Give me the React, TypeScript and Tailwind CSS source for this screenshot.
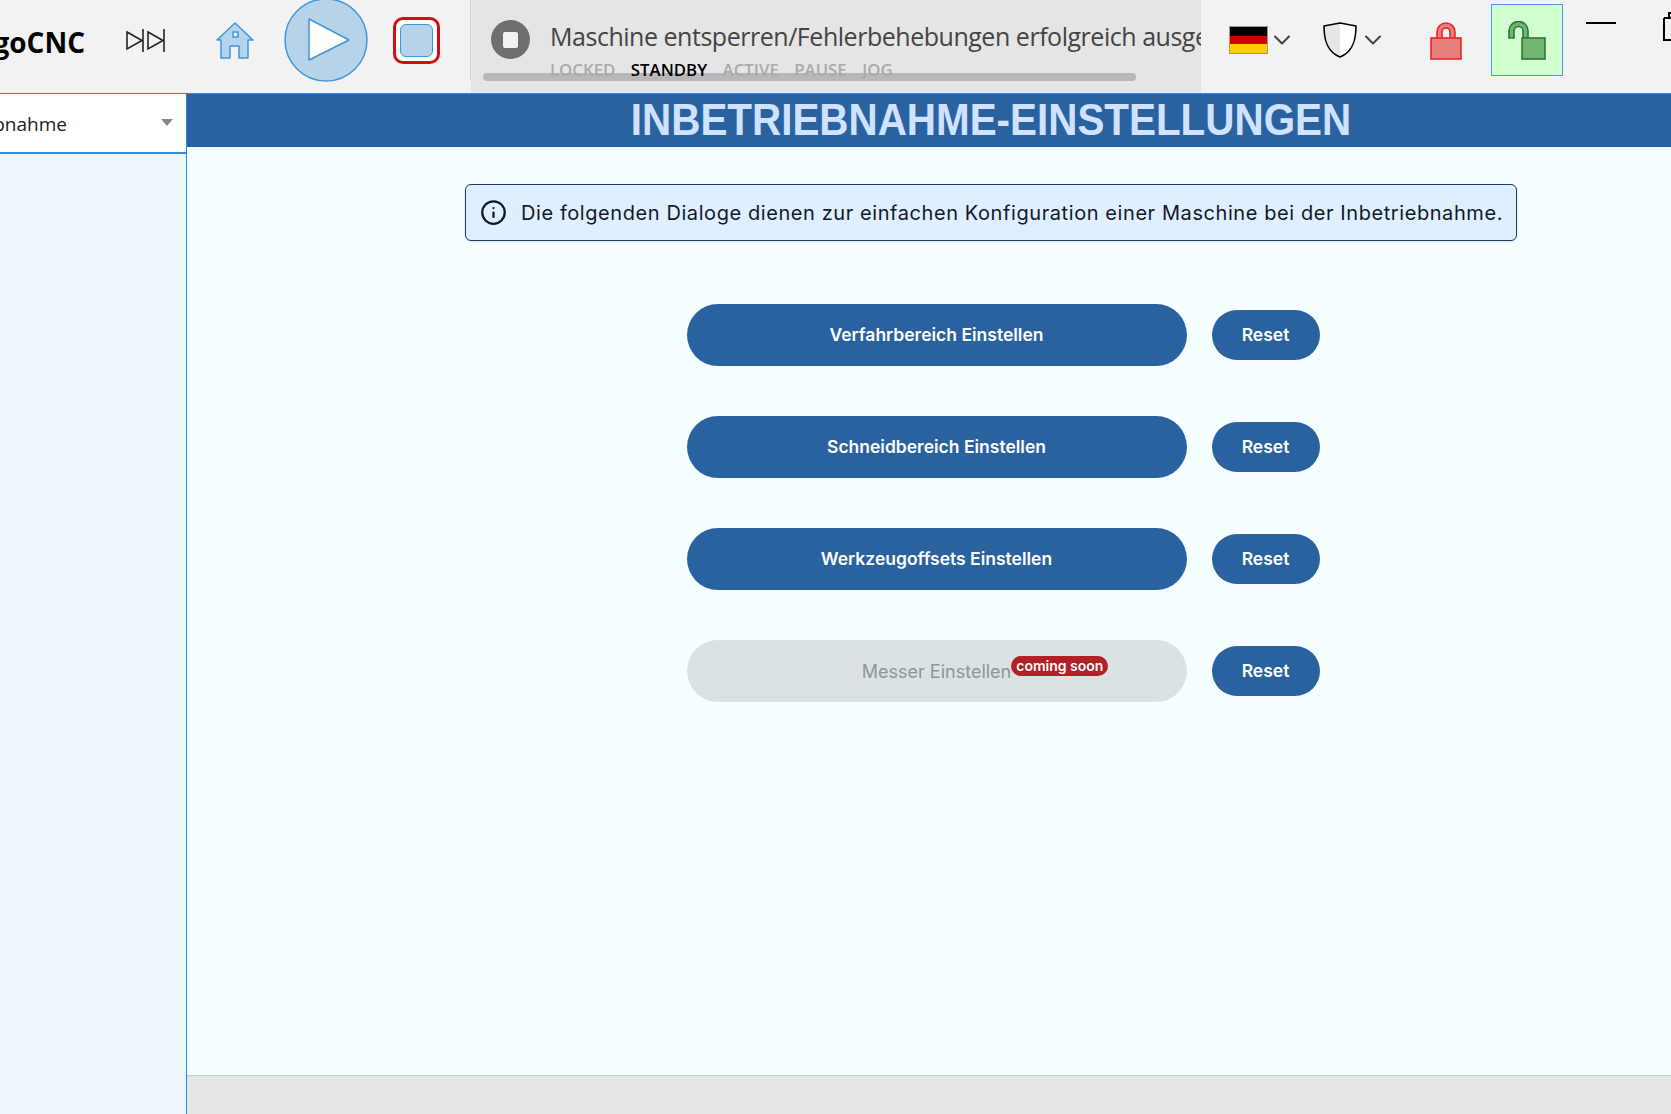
import { ChevronDown, Info } from "lucide-react";

const actions = ["Verfahrbereich Einstellen", "Schneidbereich Einstellen", "Werkzeugoffsets Einstellen"];
const states = ["LOCKED", "STANDBY", "ACTIVE", "PAUSE", "JOG"];

function ResetButton() {
  return (
    <button className="ml-[25px] h-[50px] w-[108px] rounded-full bg-[#2a62a0] text-[17.5px] font-semibold text-white">
      Reset
    </button>
  );
}

function SkipIcon() {
  return (
    <svg width="39" height="23" viewBox="0 0 39 23" fill="none" stroke="#222" strokeWidth="1.6" className="ml-[41px] shrink-0">
      <path d="M1 3 L16 11.5 L1 20 Z" />
      <path d="M17 0 V23" />
      <path d="M22 3 L37 11.5 L22 20 Z" />
      <path d="M38 0 V23" />
    </svg>
  );
}

function HomeIcon() {
  return (
    <svg width="38" height="37" viewBox="0 0 38 37" className="ml-[51px] shrink-0" fill="#b7d3ea" stroke="#3f97dc" strokeWidth="1.5">
      <path d="M1 18 L19 1 L37 18 H32 V36 H23 V24 H14 V36 H5 V18 Z" strokeLinejoin="round" />
      <rect x="17" y="10" width="5" height="5" fill="#f2f2f2" />
    </svg>
  );
}

function PlayButton() {
  return (
    <svg width="84" height="84" viewBox="0 0 84 84" className="ml-[30px] shrink-0">
      <circle cx="42" cy="42" r="41" fill="#b7d3ea" stroke="#3f97dc" strokeWidth="1.5" />
      <path d="M25 21 L65 42 L25 62 Z" fill="#fff" stroke="#3f97dc" strokeWidth="1.5" strokeLinejoin="round" />
    </svg>
  );
}

function StopButton() {
  return (
    <div className="ml-[25px] flex h-[47px] w-[47px] shrink-0 items-center justify-center rounded-[10px] border-[3.5px] border-[#d40d12] bg-white">
      <div className="h-[33px] w-[33px] rounded-[6px] border-[1.5px] border-[#3f97dc] bg-[#b7d3ea]" />
    </div>
  );
}

function Flag() {
  return (
    <div className="flex h-[28px] w-[39px] shrink-0 flex-col border border-[#a59a6a]">
      <div className="flex-1 bg-black" />
      <div className="flex-1 bg-[#d00000]" />
      <div className="flex-1 bg-[#ffce00]" />
    </div>
  );
}

function ShieldIcon() {
  return (
    <svg width="34" height="36" viewBox="0 0 34 36" className="shrink-0">
      <path d="M17 1 L33 4 C33 18 30 30 17 35 Z" fill="#fff" />
      <path d="M17 1 L1 4 C1 18 4 30 17 35 Z" fill="#e6e6e6" />
      <path d="M17 1 L33 4 C33 18 30 30 17 35 C4 30 1 18 1 4 Z" fill="none" stroke="#000" strokeWidth="1.6" strokeLinejoin="round" />
    </svg>
  );
}

function RedLock() {
  return (
    <svg width="32" height="39" viewBox="0 0 32 39" className="shrink-0" stroke="#ec2528" strokeWidth="1.6">
      <path d="M7 18 V11 A9 9 0 0 1 25 11 V18 H20 V11 A4 4 0 0 0 12 11 V18 Z" fill="#e77e7e" />
      <rect x="1" y="17" width="30" height="21" fill="#e77e7e" />
    </svg>
  );
}

function GreenLock() {
  return (
    <svg width="38" height="39" viewBox="0 0 38 39" stroke="#2c7a30" strokeWidth="1.6">
      <path d="M1 17 V10 A9.5 9.5 0 0 1 20 10 V17 H15 V10 A4 4 0 0 0 6 10 V17 Z" fill="#72b472" />
      <rect x="14" y="17" width="23" height="21" fill="#72b472" />
    </svg>
  );
}

function Header() {
  return (
    <header className="flex h-[93px] shrink-0 bg-[#f2f2f2] font-['Open_Sans',sans-serif]">
      <div className="flex h-[80px] w-[471px] shrink-0 items-center border-r border-[#d4d4d4]">
        <div className="mt-[3px] flex w-[85px] shrink-0 justify-end overflow-hidden text-[28px] font-bold whitespace-nowrap text-black">
          goCNC
        </div>
        <SkipIcon />
        <HomeIcon />
        <PlayButton />
        <StopButton />
      </div>
      <div className="relative flex w-[730px] shrink-0 bg-[#e5e5e5]">
        <div className="mt-[20px] ml-[20px] flex h-[39px] w-[39px] shrink-0 items-center justify-center rounded-full bg-[#6f6f6f]">
          <div className="h-[16px] w-[15px] rounded-[2px] bg-[#f2f2f2]" />
        </div>
        <div className="relative z-10 ml-[20px] min-w-0 flex-1 overflow-hidden">
          <div className="mt-[16px] text-[25px] leading-[40px] tracking-[-0.47px] whitespace-nowrap text-[#444]">
            Maschine entsperren/Fehlerbehebungen erfolgreich ausgeführt
          </div>
          <div className="mt-[4px] flex gap-[15.5px] text-[16.8px] leading-[20px] font-semibold text-[#aaa]">
            {states.map((s) => (
              <span key={s} className={s === "STANDBY" ? "text-black" : ""}>
                {s}
              </span>
            ))}
          </div>
        </div>
        <div className="absolute top-[73px] left-[12px] h-[8px] w-[653px] rounded-full bg-[#b8b8b8]" />
      </div>
      <div className="flex h-[80px] flex-1 items-center overflow-hidden">
        <div className="ml-[28px] flex items-center">
          <Flag />
          <ChevronDown size={28} strokeWidth={1.8} className="text-[#444]" />
        </div>
        <div className="ml-[27px] flex items-center gap-[2px]">
          <ShieldIcon />
          <ChevronDown size={28} strokeWidth={1.8} className="text-[#444]" />
        </div>
        <div className="ml-[43px]">
          <RedLock />
        </div>
        <div className="ml-[29px] flex h-[72px] w-[72px] shrink-0 items-center justify-center border border-[#4a9ee0] bg-[#d1ffd1]">
          <GreenLock />
        </div>
        <div className="mb-[34px] ml-[23px] h-[2px] w-[30px] shrink-0 bg-black" />
        <svg width="20" height="30" viewBox="0 0 20 30" fill="none" stroke="#000" strokeWidth="2" className="mb-[26px] ml-[47px] shrink-0">
          <path d="M1 6 H20 M1 6 V28 H20 M6 6 V1 H20" />
        </svg>
      </div>
    </header>
  );
}

function Sidebar() {
  return (
    <aside className="w-[187px] shrink-0 border-r border-[#1e8fe6] bg-[#eef5fd]">
      <div className="relative flex h-[60px] items-center justify-end overflow-hidden border-b-2 border-[#2f8fdc] bg-white pt-[2px] pr-[119px] font-['Open_Sans',sans-serif] text-[19px] whitespace-nowrap text-[#222]">
        Inbetriebnahme
        <div className="absolute top-[25px] right-[13px] h-0 w-0 border-x-[6px] border-t-[7px] border-x-transparent border-t-[#888]" />
      </div>
    </aside>
  );
}

export default function App() {
  return (
    <div className="flex h-[1114px] w-[1671px] flex-col overflow-hidden bg-[#f5ffff] font-['Inter',sans-serif]">
      <Header />
      <div className="flex min-h-0 flex-1 border-t border-[#2f8fdc]">
        <Sidebar />
        <main className="flex min-w-0 flex-1 flex-col">
          <div className="h-[53px] shrink-0 overflow-hidden bg-[#2a62a0]">
            <div className="w-[1608px] scale-x-[0.918] text-center font-['Liberation_Sans',sans-serif] text-[44px] leading-[51px] font-bold text-[#cfe2ff]">
              INBETRIEBNAHME-EINSTELLUNGEN
            </div>
          </div>
          <div className="min-h-0 flex-1 overflow-hidden">
            <div className="flex w-[1608px] flex-col items-center pt-[37px]">
              <div className="flex h-[57px] w-[1052px] items-center gap-[14px] rounded-md border border-[#1d3a5f] bg-[#e0efff] pl-[14px] text-[20px] tracking-[0.58px] whitespace-nowrap text-[#111827] shadow-sm">
                <Info size={27} strokeWidth={2} />
                Die folgenden Dialoge dienen zur einfachen Konfiguration einer Maschine bei der Inbetriebnahme.
              </div>
              <div className="mt-[63px] ml-[24px] flex flex-col gap-[50px]">
                {actions.map((label) => (
                  <div key={label} className="flex items-center">
                    <button className="h-[62px] w-[500px] rounded-full bg-[#2a62a0] text-[17.5px] font-semibold text-white">
                      {label}
                    </button>
                    <ResetButton />
                  </div>
                ))}
                <div className="flex items-center">
                  <div className="flex h-[62px] w-[500px] items-center justify-center rounded-full bg-[#dbe2e3] text-[18px] text-[#8a979c]">
                    <span className="relative">
                      Messer Einstellen
                      <span className="absolute -top-[2px] left-full rounded-full bg-[#b02025] px-[5px] text-[14px] leading-[20px] font-semibold whitespace-nowrap text-white">
                        coming soon
                      </span>
                    </span>
                  </div>
                  <ResetButton />
                </div>
              </div>
            </div>
          </div>
          <div className="h-[39px] shrink-0 border-t border-[#cccccc] bg-[#e5e5e5]" />
        </main>
      </div>
    </div>
  );
}
